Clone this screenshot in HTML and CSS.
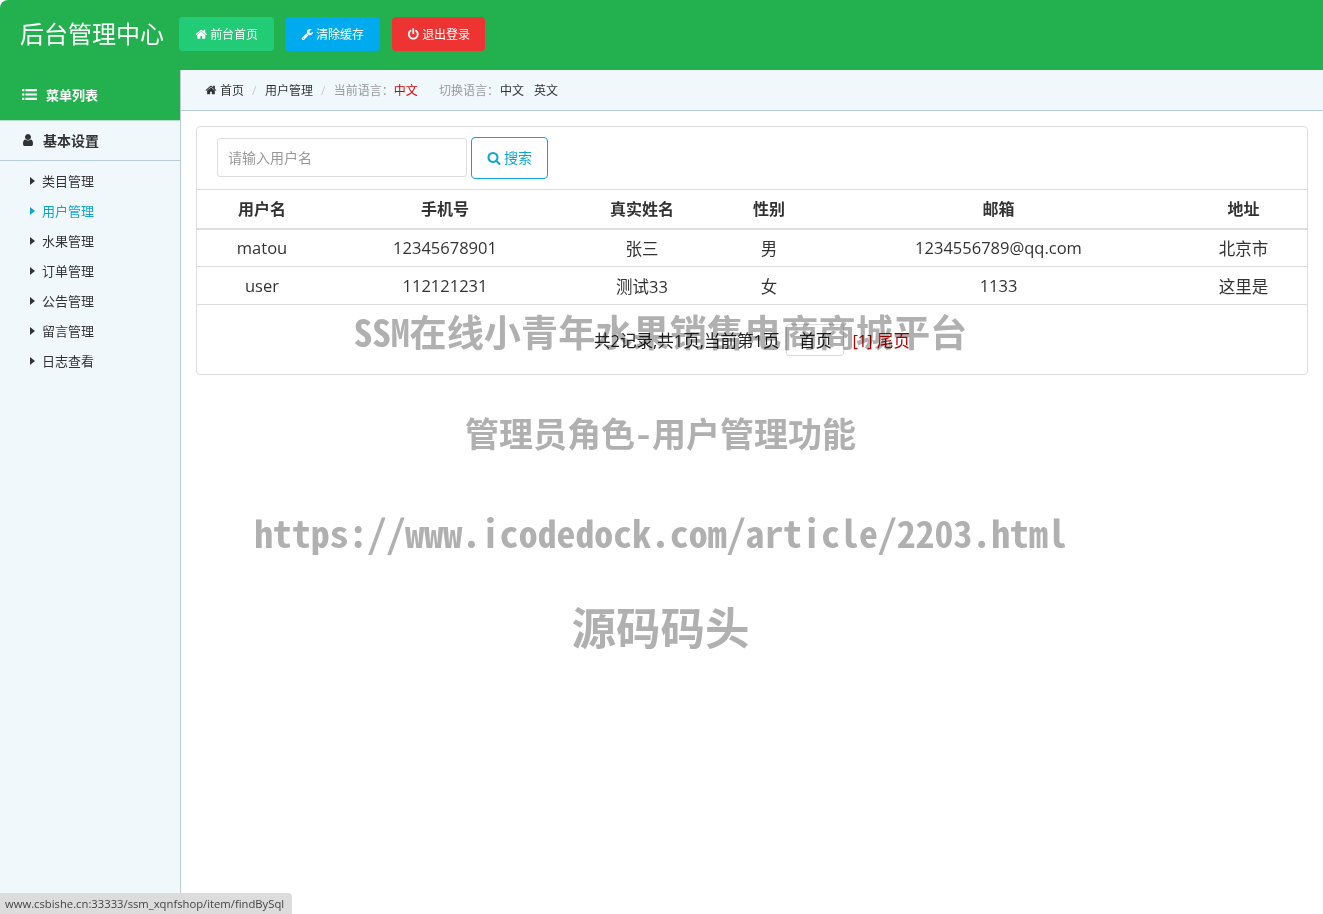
FILE: index.html
```html
<!DOCTYPE html>
<html lang="zh-CN">
<head>
<meta charset="utf-8">
<title>后台管理中心</title>
<link rel="stylesheet" href="styles.css">
</head>
<body>
<svg class="defs" aria-hidden="true">
  <symbol id="i-home" viewBox="0 0 1792 1792"><path d="M1472 992v480q0 26-19 45t-45 19h-384v-384h-256v384h-384q-26 0-45-19t-19-45v-480q0-1 .5-3t.5-3l575-474 575 474q1 2 1 6zm223-69l-62 74q-8 9-21 11h-3q-13 0-21-7l-692-577-692 577q-12 8-24 7-13-2-21-11l-62-74q-8-10-7-23.5t11-21.5l719-599q32-26 76-26t76 26l244 204v-195q0-14 9-23t23-9h192q14 0 23 9t9 23v408l219 182q10 8 11 21.5t-7 23.5z"/></symbol>
  <symbol id="i-wrench" viewBox="0 0 1792 1792"><path d="M448 1472q0-26-19-45t-45-19-45 19-19 45 19 45 45 19 45-19 19-45zm644-420l-682 682q-37 37-90 37-52 0-91-37l-106-108q-38-36-38-90 0-53 38-91l681-681q39 98 114.5 173.5t173.5 114.5zm634-435q0 39-23 106-47 134-164.5 217.5t-258.5 83.5q-185 0-316.5-131.5t-131.5-316.5 131.5-316.5 316.5-131.5q58 0 121.5 16.5t107.5 46.5q16 11 16 28t-16 28l-293 169v224l193 107q5-3 79-48.5t135.5-81 70.5-35.5q15 0 23.5 10t8.5 25z"/></symbol>
  <symbol id="i-power" viewBox="0 0 1792 1792"><path d="M1664 896q0 156-61 298t-164 245-245 164-298 61-298-61-245-164-164-245-61-298q0-182 80.5-343t226.5-270q43-32 95.5-25t83.5 50q32 42 24.5 94.5t-49.5 84.5q-98 74-151.5 181t-53.5 228q0 104 40.5 198.5t109.5 163.5 163.5 109.5 198.5 40.5 198.5-40.5 163.5-109.5 109.5-163.5 40.5-198.5q0-121-53.5-228t-151.5-181q-42-32-49.5-84.5t24.5-94.5q31-43 84-50t95 25q146 109 226.5 270t80.5 343zm-640-768v640q0 52-38 90t-90 38-90-38-38-90v-640q0-52 38-90t90-38 90 38 38 90z"/></symbol>
  <symbol id="i-user" viewBox="0 0 1792 1792"><path d="M1536 1399q0 109-62.5 187t-150.5 78h-854q-88 0-150.5-78t-62.5-187q0-85 8.5-160.5t31.5-152 58.5-131 94-89 134.5-34.5q131 128 313 128t313-128q76 0 134.5 34.5t94 89 58.5 131 31.5 152 8.5 160.5zm-256-887q0 159-112.5 271.5t-271.5 112.5-271.5-112.5-112.5-271.5 112.5-271.5 271.5-112.5 271.5 112.5 112.5 271.5z"/></symbol>
  <symbol id="i-search" viewBox="0 0 1792 1792"><path d="M1216 832q0-185-131.5-316.5t-316.5-131.5-316.5 131.5-131.5 316.5 131.5 316.5 316.5 131.5 316.5-131.5 131.5-316.5zm512 832q0 52-38 90t-90 38q-54 0-90-38l-343-342q-179 124-399 124-143 0-273.5-55.5t-225-150-150-225-55.5-273.5 55.5-273.5 150-225 225-150 273.5-55.5 273.5 55.5 225 150 150 225 55.5 273.5q0 220-124 399l343 343q37 37 37 90z"/></symbol>
  <symbol id="i-bars" viewBox="0 0 16 14"><path d="M0 1h2.4v2.4H0zM3.6 1H16v2.4H3.6zM0 5.8h2.4v2.4H0zM3.6 5.8H16v2.4H3.6zM0 10.6h2.4V13H0zM3.6 10.6H16V13H3.6z"/></symbol>
  <symbol id="i-caret" viewBox="0 0 5 8"><path d="M0 0l5 4-5 4z"/></symbol>
</svg>

<header class="topbar">
  <h1 class="brand">后台管理中心</h1>
  <nav class="topnav">
    <a class="topbtn topbtn-green"><svg class="ico ico-sm"><use href="#i-home"/></svg>前台首页</a>
    <a class="topbtn topbtn-blue"><svg class="ico ico-sm"><use href="#i-wrench"/></svg>清除缓存</a>
    <a class="topbtn topbtn-red"><svg class="ico ico-sm"><use href="#i-power"/></svg>退出登录</a>
  </nav>
</header>

<div class="frame">
  <aside class="sidebar">
    <div class="side-head"><svg class="ico-bars"><use href="#i-bars"/></svg>菜单列表</div>
    <div class="side-group"><svg class="ico-user"><use href="#i-user"/></svg>基本设置</div>
    <ul class="side-list">
      <li class="side-item"><svg class="caret"><use href="#i-caret"/></svg>类目管理</li>
      <li class="side-item is-active"><svg class="caret"><use href="#i-caret"/></svg>用户管理</li>
      <li class="side-item"><svg class="caret"><use href="#i-caret"/></svg>水果管理</li>
      <li class="side-item"><svg class="caret"><use href="#i-caret"/></svg>订单管理</li>
      <li class="side-item"><svg class="caret"><use href="#i-caret"/></svg>公告管理</li>
      <li class="side-item"><svg class="caret"><use href="#i-caret"/></svg>留言管理</li>
      <li class="side-item"><svg class="caret"><use href="#i-caret"/></svg>日志查看</li>
    </ul>
  </aside>

  <main class="main">
    <div class="crumbs">
      <svg class="ico-crumb"><use href="#i-home"/></svg><span class="dark">首页</span>
      <span class="sep">/</span>
      <span class="dark">用户管理</span>
      <span class="sep">/</span>
      <span class="muted">当前语言：</span><span class="red">中文</span>
      <span class="muted switch">切换语言：</span><span class="dark">中文</span>
      <span class="dark en">英文</span>
    </div>

    <section class="card">
      <form class="search">
        <input class="search-input" type="text" placeholder="请输入用户名">
        <button class="search-btn" type="button"><svg class="ico-search"><use href="#i-search"/></svg>搜索</button>
      </form>
      <table class="grid">
        <colgroup>
          <col class="c1"><col class="c2"><col class="c3"><col class="c4"><col class="c5"><col class="c6">
        </colgroup>
        <thead>
          <tr><th>用户名</th><th>手机号</th><th>真实姓名</th><th>性别</th><th>邮箱</th><th>地址</th></tr>
        </thead>
        <tbody>
          <tr><td>matou</td><td>12345678901</td><td>张三</td><td>男</td><td>1234556789@qq.com</td><td>北京市</td></tr>
          <tr><td>user</td><td>112121231</td><td>测试33</td><td>女</td><td>1133</td><td>这里是</td></tr>
        </tbody>
      </table>
      <div class="pager">
        <span>共2记录,共1页,当前第1页</span>
        <a class="pager-first">首页</a>
        <span class="pager-red">[1] 尾页</span>
      </div>
    </section>
  </main>
</div>

<div class="watermark">
  <div class="wm wm1">SSM在线小青年水果销售电商商城平台</div>
  <div class="wm wm2">管理员角色-用户管理功能</div>
  <div class="wm wm3">https://www.icodedock.com/article/2203.html</div>
  <div class="wm wm4">源码码头</div>
</div>

<div class="status">www.csbishe.cn:33333/ssm_xqnfshop/item/findBySql</div>
</body>
</html>
```
FILE: styles.css
```css
* { box-sizing: border-box; }
html, body { margin: 0; height: 100%; }
body {
  font-family: "Open Sans", "Noto Sans CJK SC", sans-serif;
  color: #333;
  background: #fff;
  overflow: hidden;
}
.defs { position: absolute; width: 0; height: 0; }

.topbar {
  height: 70px;
  background: #23b14f;
  border-top-left-radius: 8px;
  display: flex;
  align-items: flex-start;
  padding: 17px 0 0 20px;
}
.brand {
  margin: 0;
  font-size: 24px;
  font-weight: 400;
  line-height: 34px;
  color: #fff;
  letter-spacing: 0;
}
.topnav { display: flex; margin-left: 15px; gap: 11px; }
.topbtn {
  height: 34px;
  width: 95px;
  border-radius: 4px;
  color: #fff;
  font-size: 12px;
  display: flex;
  align-items: center;
  justify-content: center;
  letter-spacing: -.1px;
}
.topbtn-green { background: #22cc77; }
.topbtn-blue { background: #00aaee; }
.topbtn-red { background: #ee3333; width: 93px; margin-left: 1px; }
.ico { fill: currentColor; }
.ico-sm { width: 12.5px; height: 12.5px; margin-right: 2.5px; }

.frame { display: flex; height: 844px; }
.sidebar {
  width: 181px;
  flex: none;
  background: #f1f8fc;
  border-right: 1px solid #b8cdd4;
}
.side-head {
  height: 50px;
  background: #23b14f;
  color: #fff;
  font-size: 13px;
  font-weight: 700;
  display: flex;
  align-items: center;
  padding: 0 0 2px 22px;
}
.ico-bars { width: 15px; height: 13px; fill: #fff; margin-right: 9px; }
.side-group {
  height: 41px;
  border-top: 1px solid #b3e0cc;
  border-bottom: 1px solid #b8cdd4;
  font-size: 14px;
  font-weight: 700;
  color: #333;
  display: flex;
  align-items: center;
  padding: 0 0 2px 21px;
}
.ico-user { width: 14px; height: 14px; fill: #333; margin-right: 8px; }
.side-list { list-style: none; margin: 5px 0 0; padding: 0; }
.side-item {
  height: 30px;
  display: flex;
  align-items: center;
  padding: 0 0 2px 30px;
  font-size: 13px;
  color: #333;
}
.caret { width: 5px; height: 8px; fill: #333; margin: 2px 7px 0 0; }
.is-active { color: #0ea5cf; }
.is-active .caret { fill: #0ea5cf; }

.main { flex: 1; min-width: 0; }
.crumbs {
  height: 41px;
  background: #f1f8fc;
  border-bottom: 1px solid #b8cdd4;
  display: flex;
  align-items: center;
  padding-left: 24px;
  font-size: 12px;
  color: #333;
}
.ico-crumb { width: 12px; height: 12px; fill: #333; margin-right: 3px; }
.sep { color: #ccc; margin: 0 8.5px 0 8px; }
.muted { color: #999; }
.red { color: #dd0000; }
.switch { margin: 0 1px 0 21px; }
.en { margin-left: 10px; }

.card {
  margin: 15px 15px 0;
  border: 1px solid #ddd;
  border-radius: 4px;
  background: #fff;
}
.search {
  height: 62px;
  display: flex;
  align-items: center;
  padding-left: 20px;
  gap: 4px;
}
.search-input {
  width: 250px;
  height: 39px;
  margin-bottom: 2px;
  border: 1px solid #ddd;
  border-radius: 3px;
  padding: 0 10px;
  font: 14px "Open Sans", "Noto Sans CJK SC", sans-serif;
  background: #fff;
}
.search-input::placeholder { color: #999; opacity: 1; }
.search-btn {
  width: 77px;
  height: 42px;
  border: 1px solid #0ea5cf;
  border-radius: 4px;
  background: #fff;
  color: #0ea5cf;
  font: 14px "Open Sans", "Noto Sans CJK SC", sans-serif;
  display: flex;
  align-items: center;
  justify-content: center;
  padding: 0 0 2px;
}
.ico-search { width: 14px; height: 14px; fill: #0ea5cf; margin: 2px 3px 0 0; }

.grid { width: 100%; border-collapse: collapse; table-layout: fixed; font-size: 16.5px; }
.c1 { width: 130px; }
.c2 { width: 236px; }
.c3 { width: 158px; }
.c4 { width: 96px; }
.c5 { width: 363px; }
.c6 { width: 127px; }
.grid th, .grid td { text-align: center; padding: 0; color: #333; }
.grid th { height: 39px; border-top: 1px solid #ddd; border-bottom: 2px solid #ddd; font-weight: 700; font-size: 16px; padding-bottom: 2px; }
.grid td { height: 38px; border-bottom: 1px solid #ddd; }
.pager {
  height: 69px;
  display: flex;
  align-items: center;
  justify-content: center;
  font-size: 16.5px;
  color: #222;
}
.pager-first {
  width: 58px;
  height: 32px;
  margin: 0 8px 0 7px;
  border: 1px solid #ddd;
  border-radius: 3px;
  display: flex;
  align-items: center;
  justify-content: center;
}
.pager-red { color: #c00000; }

.watermark { position: absolute; inset: 0; pointer-events: none; mix-blend-mode: multiply; }
.wm {
  position: absolute;
  left: 0;
  width: 1321px;
  text-align: center;
  color: #b0b0b0;
  font-family: "Noto Sans Mono CJK SC", "DejaVu Sans Mono", "Noto Sans CJK SC", monospace;
  font-weight: 700;
  white-space: nowrap;
}
.wm1 { top: 305px; font-size: 37.2px; line-height: 52px; }
.wm2 { top: 407px; font-size: 34px; line-height: 52px; }
.wm3 { top: 506px; font-size: 37.8px; line-height: 52px; }
.wm4 { top: 599px; font-size: 44.5px; line-height: 54px; }

.status {
  position: fixed;
  left: 0;
  bottom: 0;
  width: 292px;
  height: 21px;
  background: rgba(218, 218, 218, .95);
  border-top-right-radius: 4px;
  font: 11.25px/22px "Open Sans", sans-serif;
  color: #444;
  padding-left: 5px;
  white-space: nowrap;
}
```
